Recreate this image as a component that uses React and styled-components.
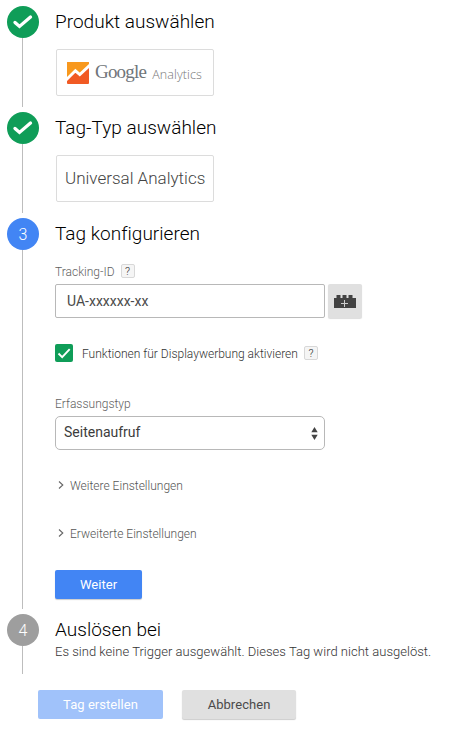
import React from "react";
import styled, { createGlobalStyle } from "styled-components";

const GlobalStyle = createGlobalStyle`
  * { box-sizing: border-box; }
  body {
    margin: 0;
    background: #fff;
    font-family: Roboto, sans-serif;
    font-weight: 300;
  }
  button, input { font-family: inherit; }
`;

const Page = styled.main`
  width: 460px;
  height: 732px;
  padding: 6px 0 0 7px;
  overflow: hidden;
`;

const Step = styled.section`
  display: flex;
  gap: 16px;
  height: ${(p) => p.$height}px;
  margin-bottom: 5px;
`;

const Rail = styled.div`
  display: flex;
  flex-direction: column;
  align-items: center;
  width: 32px;
  flex: none;
`;

const Marker = styled.div`
  display: flex;
  align-items: center;
  justify-content: center;
  width: 32px;
  height: 32px;
  flex: none;
  border-radius: 50%;
  background: ${(p) => p.$color};
  color: #fff;
  font-size: 16px;
`;

const Line = styled.div`
  flex: 1;
  width: 1px;
  margin-right: 1px;
  background: #bdbdbd;
`;

const Content = styled.div`
  flex: 1;
`;

const Title = styled.h2`
  margin: 0;
  height: 32px;
  line-height: 31px;
  font-size: 19px;
  font-weight: 300;
  letter-spacing: 0.02px;
  color: #000;
  white-space: nowrap;
`;

const Card = styled.div`
  display: flex;
  align-items: center;
  width: 158px;
  height: 47px;
  margin: 11px 0 0 1px;
  padding: 0 ${(p) => p.$pad}px ${(p) => p.$lift || 0}px;
  border: 1px solid #dcdcdc;
  border-radius: 2px;
  color: #444;
  font-size: 17px;
  white-space: nowrap;
`;

const LogoWord = styled.span`
  margin: 0 0 1px 6px;
  font-family: "Liberation Serif", serif;
  font-weight: 400;
  font-size: 19px;
  letter-spacing: -0.8px;
  color: #70757a;
`;

const LogoProduct = styled.span`
  margin: 3px 0 0 6px;
  font-family: "Open Sans", sans-serif;
  font-weight: 300;
  font-size: 12.5px;
  letter-spacing: 0.1px;
  color: #777;
`;

const Label = styled.div`
  display: flex;
  align-items: center;
  height: 14px;
  margin-top: ${(p) => p.$top}px;
  font-size: 12px;
  color: #616161;
`;

const LabelText = styled.span`
  padding-top: 2px;
`;

const Help = styled.span`
  display: flex;
  align-items: center;
  justify-content: center;
  width: 14px;
  height: 14px;
  margin-left: 6px;
  border: 1px solid #d8d8d8;
  border-radius: 2px;
  background: #f5f5f5;
  color: #222;
  font-size: 11px;
`;

const InputRow = styled.div`
  display: flex;
  gap: 3px;
  margin-top: 6px;
`;

const TextInput = styled.input`
  width: 270px;
  height: 34px;
  padding: 0 11px;
  border: 1px solid #b8b8b8;
  border-radius: 2px;
  font-size: 14px;
  font-weight: 400;
  color: #4a4a4a;
  outline: none;
`;

const VariableButton = styled.button`
  display: flex;
  align-items: center;
  justify-content: center;
  width: 34px;
  height: 34px;
  padding: 0;
  border: 0;
  border-radius: 2px;
  background: #e0e0e0;
  box-shadow: 0 1px 1px rgba(0, 0, 0, 0.14);
`;

const CheckRow = styled.div`
  display: flex;
  align-items: center;
  height: 18px;
  margin-top: 26px;
  font-size: 12px;
  color: #333;
  white-space: nowrap;
`;

const Checkbox = styled.span`
  display: flex;
  width: 18px;
  height: 18px;
  margin-right: 9px;
  border-radius: 2px;
  background: #0f9d58;
`;

const Select = styled.div`
  display: flex;
  align-items: center;
  justify-content: space-between;
  width: 270px;
  height: 34px;
  margin-top: 5px;
  padding: 0 6px 0 8px;
  border: 1px solid #b8b8b8;
  border-radius: 5px;
  font-size: 14px;
  font-weight: 400;
  color: #3c3c3c;
`;

const SelectValue = styled.span`
  padding-bottom: 2px;
`;

const Expander = styled.div`
  display: flex;
  align-items: center;
  gap: 6px;
  height: 14px;
  margin: ${(p) => p.$top}px 0 0 3px;
  font-size: 12px;
  color: #555;
`;

const Button = styled.button`
  width: ${(p) => p.$width}px;
  height: 29px;
  padding: 0;
  border: 0;
  border-radius: 2px;
  font-size: 13px;
  font-weight: 400;
  letter-spacing: 0.05px;
  color: ${(p) => (p.$kind === "plain" ? "#4a4a4a" : "#fff")};
  background: ${(p) =>
    ({ primary: "#4285f4", disabled: "#a0c2fa", plain: "#e0e0e0" })[p.$kind]};
  box-shadow: ${(p) =>
    p.$kind === "disabled" ? "none" : "0 1px 1px rgba(0, 0, 0, 0.2)"};
`;

const NextButton = styled(Button)`
  display: block;
  margin-top: 29px;
`;

const Note = styled.p`
  margin: -2px 0 0;
  font-size: 13px;
  line-height: 15px;
  letter-spacing: 0.02px;
  color: #333;
  white-space: nowrap;
`;

const Actions = styled.div`
  display: flex;
  gap: 19px;
  margin: 16px 0 0 31px;
`;

const DoneIcon = () => (
  <svg width="32" height="32" viewBox="0 0 32 32" fill="none">
    <path
      d="M8 16.4l4.5 4L23.5 11"
      stroke="#fff"
      strokeWidth="3.3"
      strokeLinecap="round"
    />
  </svg>
);

const AnalyticsLogo = () => (
  <svg width="22" height="22" viewBox="0 0 22 22">
    <rect width="22" height="22" rx="1" fill="#f15a24" />
    <path d="M1 0h20a1 1 0 0 1 1 1v3L12.8 12.6 8.4 8.8 0 17V1a1 1 0 0 1 1-1z" fill="#f8981d" />
    <path d="M-1 18L8.4 8.8l4.4 3.8L23 3" stroke="#fff" strokeWidth="2.9" fill="none" />
  </svg>
);

const BrickIcon = () => (
  <svg width="22" height="13" viewBox="0 0 22 13">
    <path d="M0 3h2.5V0h4v3h2V0h4v3h2V0h4v3H22v10H0z" fill="#424242" />
    <path d="M10.5 5v7M7 8.5h7" stroke="#ccc" strokeWidth="1" />
  </svg>
);

const Chevron = () => (
  <svg width="6" height="10" viewBox="0 0 6 10" fill="none">
    <path d="M1 .5L4.8 4 1 7.5" stroke="#666" strokeWidth="1.1" />
  </svg>
);

function WizardStep({ height, color, marker, title, children }) {
  return (
    <Step $height={height}>
      <Rail>
        <Marker $color={color}>{marker}</Marker>
        <Line />
      </Rail>
      <Content>
        <Title>{title}</Title>
        {children}
      </Content>
    </Step>
  );
}

export default function App() {
  return (
    <Page>
      <GlobalStyle />
      <WizardStep height={101} color="#0f9d58" marker={<DoneIcon />} title="Produkt auswählen">
        <Card $pad={10}>
          <AnalyticsLogo />
          <LogoWord>Google</LogoWord>
          <LogoProduct>Analytics</LogoProduct>
        </Card>
      </WizardStep>
      <WizardStep height={101} color="#0f9d58" marker={<DoneIcon />} title="Tag-Typ auswählen">
        <Card $pad={8} $lift={2}>Universal Analytics</Card>
      </WizardStep>
      <WizardStep height={391} color="#4285f4" marker="3" title="Tag konfigurieren">
        <Label $top={14}>
          <LabelText>Tracking-ID</LabelText>
          <Help>?</Help>
        </Label>
        <InputRow>
          <TextInput defaultValue="UA-xxxxxx-xx" />
          <VariableButton aria-label="Variable">
            <BrickIcon />
          </VariableButton>
        </InputRow>
        <CheckRow>
          <Checkbox>
            <svg width="18" height="18" viewBox="0 0 18 18" fill="none">
              <path d="M3.5 9.5l3.7 3.6L14.7 5.2" stroke="#fff" strokeWidth="1.9" />
            </svg>
          </Checkbox>
          <LabelText>Funktionen für Displaywerbung aktivieren</LabelText>
          <Help>?</Help>
        </CheckRow>
        <Label $top={35}>Erfassungstyp</Label>
        <Select>
          <SelectValue>Seitenaufruf</SelectValue>
          <svg width="7" height="13" viewBox="0 0 7 13">
            <path d="M3.5 0L6.7 5.3H.3zM3.5 13L6.7 7.7H.3z" fill="#444" />
          </svg>
        </Select>
        <Expander $top={29}>
          <Chevron />
          Weitere Einstellungen
        </Expander>
        <Expander $top={34}>
          <Chevron />
          Erweiterte Einstellungen
        </Expander>
        <NextButton $kind="primary" $width={87}>Weiter</NextButton>
      </WizardStep>
      <WizardStep height={60} color="#9e9e9e" marker="4" title="Auslösen bei">
        <Note>Es sind keine Trigger ausgewählt. Dieses Tag wird nicht ausgelöst.</Note>
      </WizardStep>
      <Actions>
        <Button $kind="disabled" $width={125}>Tag erstellen</Button>
        <Button $kind="plain" $width={114}>Abbrechen</Button>
      </Actions>
    </Page>
  );
}
